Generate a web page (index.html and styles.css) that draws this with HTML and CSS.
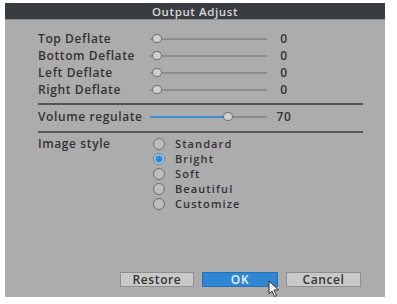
FILE: index.html
```html
<!DOCTYPE html>
<html>
<head>
<meta charset="utf-8">
<link rel="stylesheet" href="styles.css">
</head>
<body>
<div class="panel">
  <div class="title">Output Adjust</div>
  <div class="content">
    <div class="row">
      <span class="label">Top Deflate</span>
      <div class="track"><span class="knob" style="left:7px"></span></div>
      <span class="value">0</span>
    </div>
    <div class="row">
      <span class="label">Bottom Deflate</span>
      <div class="track"><span class="knob" style="left:7px"></span></div>
      <span class="value">0</span>
    </div>
    <div class="row">
      <span class="label">Left Deflate</span>
      <div class="track"><span class="knob" style="left:7px"></span></div>
      <span class="value">0</span>
    </div>
    <div class="row">
      <span class="label">Right Deflate</span>
      <div class="track"><span class="knob" style="left:7px"></span></div>
      <span class="value">0</span>
    </div>
    <div class="sep"></div>
    <div class="row vol">
      <span class="label">Volume regulate</span>
      <div class="track"><span class="fill" style="width:78px"></span><span class="knob" style="left:78px"></span></div>
      <span class="value">70</span>
    </div>
    <div class="sep sep2"></div>
    <div class="style-row">
      <span class="label">Image style</span>
      <div class="options">
        <div class="opt"><span class="radio"></span><span class="opt-text">Standard</span></div>
        <div class="opt"><span class="radio on"></span><span class="opt-text">Bright</span></div>
        <div class="opt"><span class="radio"></span><span class="opt-text">Soft</span></div>
        <div class="opt"><span class="radio"></span><span class="opt-text">Beautiful</span></div>
        <div class="opt"><span class="radio"></span><span class="opt-text">Customize</span></div>
      </div>
    </div>
    <div class="buttons">
      <button class="btn">Restore</button>
      <button class="btn ok">OK</button>
      <button class="btn">Cancel</button>
      <svg class="cursor" width="12" height="18" viewBox="0 0 12 18"><path d="M1 1 L1 14 L4 11 L6.5 16.5 L8.5 15.5 L6 10 L10.5 10 Z" fill="#f4f4f4" stroke="#333" stroke-width="1"/></svg>
    </div>
  </div>
</div>
</body>
</html>
```
FILE: styles.css
```css
* { box-sizing: border-box; }
html, body { margin: 0; padding: 0; background: #ffffff; }
body {
  width: 397px;
  height: 304px;
  overflow: hidden;
  font-family: "Open Sans", "DejaVu Sans", sans-serif;
  font-weight: 600;
  font-size: 12px;
  line-height: 15px;
  letter-spacing: 0.6px;
  color: #333;
}
.panel {
  margin: 3px 0 0 5px;
  width: 380px;
  height: 294px;
  background: #acacac;
  display: flex;
  flex-direction: column;
}
.title {
  height: 17px;
  background: #393d41;
  color: #d8d8d8;
  font-weight: 600;
  font-size: 11.5px;
  letter-spacing: 0.6px;
  display: flex;
  align-items: center;
  justify-content: center;
  border-bottom: 1px solid #8a8c8e;
}
.content {
  flex: 1;
  display: flex;
  flex-direction: column;
  padding: 10px 0 10px 33px;
}
.row {
  height: 17px;
  display: flex;
  align-items: center;
}
.label {
  width: 112px;
  flex: none;
  white-space: nowrap;
}
.track {
  position: relative;
  width: 117px;
  height: 2px;
  background: #8c8c8c;
}
.fill {
  position: absolute;
  left: 0;
  top: 0;
  height: 2px;
  background: #3d8fd0;
}
.knob {
  position: absolute;
  top: -4px;
  width: 10px;
  height: 9px;
  margin-left: -5px;
  border-radius: 50%;
  background: #cfcfcf;
  border: 1.5px solid #6b7378;
}
.value {
  width: 34px;
  text-align: center;
}
.sep {
  width: 325px;
  height: 2px;
  background: #555;
  margin-top: 5px;
  margin-bottom: 3px;
}
.sep2 {
  margin-top: 6px;
  margin-bottom: 3px;
}
.style-row {
  display: flex;
}
.style-row .label {
  height: 15px;
}
.options {
  margin-left: 3px;
  display: flex;
  flex-direction: column;
}
.opt {
  height: 15px;
  display: flex;
  align-items: center;
  gap: 10px;
}
.opt-text {
  font-size: 11px;
  letter-spacing: 1.1px;
  height: 15px;
  line-height: 15px;
}
.radio {
  width: 12px;
  height: 12px;
  border-radius: 50%;
  border: 1px solid #6e6e6e;
  background: #bdbdbd;
}
.radio.on {
  background: radial-gradient(circle, #2e88d6 0 3px, #8ec0e6 3.8px, #cfe2f0 5.5px);
  border-color: #6e8090;
}
.buttons {
  margin-top: auto;
  margin-right: 24px;
  position: relative;
  display: flex;
  justify-content: flex-end;
  gap: 8px;
}
.btn {
  height: 15px;
  width: 75px;
  padding: 0;
  font-family: "Open Sans", "DejaVu Sans", sans-serif;
  font-weight: 600;
  font-size: 12px;
  letter-spacing: 0.6px;
  color: #333;
  background: #c9c9c9;
  border: 1px solid #8e8e8e;
  line-height: 13px;
}
.btn:first-child { width: 74px; }
.btn.ok {
  width: 76px;
  background: #2f86d2;
  color: #e8f2fb;
  border-color: #2a6fae;
}
.cursor {
  position: absolute;
  left: 230px;
  top: 8px;
}
```
